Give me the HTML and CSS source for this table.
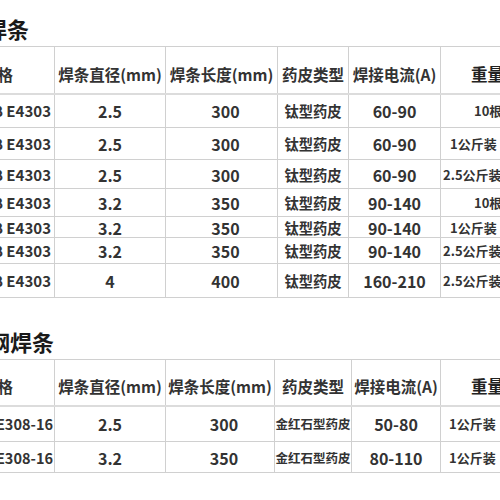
FILE: index.html
```html
<!DOCTYPE html>
<html lang="zh">
<head>
<meta charset="utf-8">
<link rel="stylesheet" href="styles.css">
</head>
<body>
<div class="page">
  <h2 class="title t1">碳钢焊条</h2>
  <table class="spec a">
    <colgroup>
      <col class="c1"><col class="c2"><col class="c3"><col class="c4"><col class="c5"><col class="c6">
    </colgroup>
    <thead>
      <tr class="h">
        <th class="name">规格</th><th>焊条直径(mm)</th><th>焊条长度(mm)</th><th>药皮类型</th><th>焊接电流(A)</th><th class="wt">重量</th>
      </tr>
    </thead>
    <tbody>
      <tr class="r34"><td class="name">J422 GB E4303</td><td>2.5</td><td class="len">300</td><td class="coat">钛型药皮</td><td>60-90</td><td class="pk i33">10根装</td></tr>
      <tr class="r32"><td class="name">J422 GB E4303</td><td>2.5</td><td class="len">300</td><td class="coat">钛型药皮</td><td>60-90</td><td class="pk i9">1公斤装</td></tr>
      <tr class="r29"><td class="name">J422 GB E4303</td><td>2.5</td><td class="len">300</td><td class="coat">钛型药皮</td><td>60-90</td><td class="pk i2">2.5公斤装(约</td></tr>
      <tr class="r28"><td class="name">J422 GB E4303</td><td>3.2</td><td class="len">350</td><td class="coat">钛型药皮</td><td>90-140</td><td class="pk i33">10根装</td></tr>
      <tr class="r21"><td class="name">J422 GB E4303</td><td>3.2</td><td class="len">350</td><td class="coat">钛型药皮</td><td>90-140</td><td class="pk i9">1公斤装</td></tr>
      <tr class="r26"><td class="name">J422 GB E4303</td><td>3.2</td><td class="len">350</td><td class="coat">钛型药皮</td><td>90-140</td><td class="pk i2">2.5公斤装</td></tr>
      <tr class="r34"><td class="name">J422 GB E4303</td><td>4</td><td class="len">400</td><td class="coat">钛型药皮</td><td>160-210</td><td class="pk i2">2.5公斤装</td></tr>
    </tbody>
  </table>

  <h2 class="title t2">不锈钢焊条</h2>
  <table class="spec b">
    <colgroup>
      <col class="c1"><col class="c2"><col class="d3"><col class="d4"><col class="d5"><col class="c6">
    </colgroup>
    <thead>
      <tr class="h2">
        <th class="name">规格</th><th>焊条直径(mm)</th><th>焊条长度(mm)</th><th>药皮类型</th><th>焊接电流(A)</th><th class="wt">重量</th>
      </tr>
    </thead>
    <tbody>
      <tr class="r36"><td class="name s">A102 E308-16</td><td>2.5</td><td class="len">300</td><td class="coat sm">金红石型药皮</td><td>50-80</td><td class="pk i8">1公斤装</td></tr>
      <tr class="r31"><td class="name s">A102 E308-16</td><td>3.2</td><td class="len">350</td><td class="coat sm">金红石型药皮</td><td>80-110</td><td class="pk i8">1公斤装</td></tr>
    </tbody>
  </table>
</div>
</body>
</html>
```

FILE: styles.css
```css
html, body {
  margin: 0;
  padding: 0;
  background: #fff;
}
body {
  width: 500px;
  height: 500px;
  overflow: hidden;
  font-family: "Noto Sans CJK SC", "Noto Sans", sans-serif;
  color: #333;
}
.page {
  margin-left: -60px;
  width: 640px;
}
.title {
  margin: 0;
  font-size: 22px;
  font-weight: 700;
  color: #1a1a1a;
  line-height: 30px;
  white-space: nowrap;
}
.t1 {
  padding-top: 13px;
  height: 33px;
  padding-left: 1px;
}
.t2 {
  margin-top: 28px;
  margin-bottom: 3px;
  padding-left: 4px;
  height: 30px;
}
.spec {
  border-collapse: collapse;
  table-layout: fixed;
  width: 628px;
}
.c1 { width: 114px; }
.c2 { width: 111px; }
.c3 { width: 112px; }
.c4 { width: 71px; }
.c5 { width: 92px; }
.c6 { width: 128px; }
.d3 { width: 109px; }
.d4 { width: 77px; }
.d5 { width: 89px; }

.spec th, .spec td {
  border: 1px solid #d0d0d0;
  padding: 0;
  text-align: center;
  vertical-align: middle;
  white-space: nowrap;
  overflow: hidden;
  line-height: 18px;
}
.spec th {
  font-size: 15.5px;
  font-weight: 700;
  color: #333;
  padding-top: 8px;
  border-bottom: 2px solid #dcdcdc;
}
.spec td {
  font-size: 16px;
  font-weight: 700;
  color: #333;
  padding-top: 1px;
}
.spec td.name {
  text-align: right;
  padding-right: 3px;
  font-size: 15px;
}
.spec td.name.s {
  padding-right: 1px;
  font-size: 14.5px;
}
.spec td.len {
  padding-left: 8px;
}
.spec td.coat {
  font-size: 14.3px;
}
.spec td.coat.sm {
  font-size: 12.5px;
}
.spec td.pk {
  text-align: left;
  font-size: 13px;
}
.spec td.i33 { padding-left: 33px; }
.spec td.i9 { padding-left: 9px; }
.spec td.i8 { padding-left: 8px; }
.spec td.i2 { padding-left: 2px; }
.spec th.wt {
  text-align: left;
  padding-left: 30px;
  font-size: 16.5px;
  color: #222;
}
.h { height: 47px; }
.h2 { height: 46px; }
.r34 { height: 34px; }
.r32 { height: 32px; }
.r29 { height: 29px; }
.r28 { height: 28px; }
.r21 { height: 21px; }
.r26 { height: 26px; }
.r36 { height: 36px; }
.r31 { height: 31px; }
```
